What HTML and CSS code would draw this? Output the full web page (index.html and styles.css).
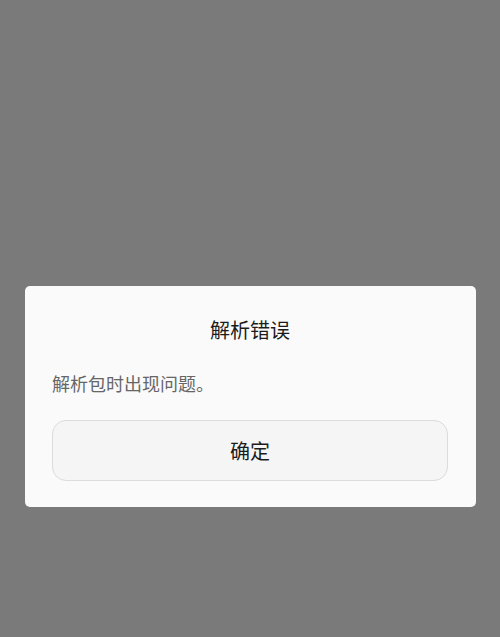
FILE: index.html
```html
<!DOCTYPE html>
<html lang="zh-CN">
<head>
    <meta charset="UTF-8">
    <meta name="viewport" content="width=device-width, initial-scale=1.0">
    <title>解析错误</title>
    <link rel="stylesheet" href="styles.css">
</head>
<body>
    <div class="screen">
        <div class="dialog">
            <h1 class="dialog-title">解析错误</h1>
            <p class="dialog-message">解析包时出现问题。</p>
            <button class="dialog-btn">确定</button>
        </div>
    </div>
</body>
</html>
```

FILE: styles.css
```css
html, body {
    margin: 0;
    padding: 0;
}
body {
    font-family: "Noto Sans CJK SC", "Noto Sans", sans-serif;
    background-color: #7a7a7a;
}
.screen {
    width: 500px;
    height: 637px;
    box-sizing: border-box;
    padding: 286px 24px 0 25px;
}
.dialog {
    background-color: #fafafa;
    border-radius: 5px;
    padding: 30px 28px 26px 27px;
    display: flex;
    flex-direction: column;
}
.dialog-title {
    margin: 0;
    font-size: 20px;
    font-weight: normal;
    line-height: 28px;
    text-align: center;
    color: #1c1c1c;
}
.dialog-message {
    margin: 26px 0 0 0;
    font-size: 18px;
    line-height: 26px;
    color: #666666;
}
.dialog-btn {
    margin-top: 24px;
    height: 61px;
    width: 100%;
    background-color: #f5f5f5;
    border: 1px solid #dcdcdc;
    border-radius: 14px;
    font-family: inherit;
    font-size: 20px;
    color: #1c1c1c;
    padding: 0;
}
```
